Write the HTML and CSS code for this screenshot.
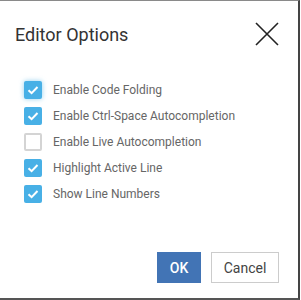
FILE: index.html
```html
<!DOCTYPE html>
<html lang="en">
<head>
    <meta charset="UTF-8">
    <title>Editor Options</title>
    <link rel="stylesheet" href="styles.css">
</head>
<body>
    <div class="dialog">
        <div class="dialog-header">
            <h1>Editor Options</h1>
            <button class="close-btn" aria-label="Close">
                <svg width="24" height="24" viewBox="0 0 24 24">
                    <path d="M1 1 L23 23 M23 1 L1 23" stroke="#222" stroke-width="1.6" fill="none"/>
                </svg>
            </button>
        </div>
        <div class="options">
            <label class="option">
                <span class="box checked focused"><svg width="18" height="18" viewBox="0 0 18 18"><path d="M4.5 9.2 L7.6 12.2 L13.5 6" stroke="#fff" stroke-width="2" fill="none"/></svg></span>
                Enable Code Folding
            </label>
            <label class="option">
                <span class="box checked"><svg width="18" height="18" viewBox="0 0 18 18"><path d="M4.5 9.2 L7.6 12.2 L13.5 6" stroke="#fff" stroke-width="2" fill="none"/></svg></span>
                Enable Ctrl-Space Autocompletion
            </label>
            <label class="option">
                <span class="box"></span>
                Enable Live Autocompletion
            </label>
            <label class="option">
                <span class="box checked"><svg width="18" height="18" viewBox="0 0 18 18"><path d="M4.5 9.2 L7.6 12.2 L13.5 6" stroke="#fff" stroke-width="2" fill="none"/></svg></span>
                Highlight Active Line
            </label>
            <label class="option">
                <span class="box checked"><svg width="18" height="18" viewBox="0 0 18 18"><path d="M4.5 9.2 L7.6 12.2 L13.5 6" stroke="#fff" stroke-width="2" fill="none"/></svg></span>
                Show Line Numbers
            </label>
        </div>
        <div class="dialog-footer">
            <button class="btn btn-primary">OK</button>
            <button class="btn btn-default">Cancel</button>
        </div>
    </div>
</body>
</html>
```

FILE: styles.css
```css
body {
    margin: 0;
    font-family: Roboto, "Liberation Sans", sans-serif;
    background-color: #fff;
}

.dialog {
    width: 300px;
    height: 300px;
    box-sizing: border-box;
    border-top: 1px solid #8a8a8a;
    border-right: 2px solid #444;
    border-bottom: 2px solid #555;
    background-color: #fff;
    display: flex;
    flex-direction: column;
}

.dialog-header {
    height: 66px;
    display: flex;
    align-items: center;
    justify-content: space-between;
    padding: 0 19px 0 15px;
}

.dialog-header h1 {
    margin: 0;
    font-size: 18px;
    font-weight: 400;
    color: #333;
}

.close-btn {
    background: none;
    border: none;
    padding: 0;
    width: 24px;
    height: 24px;
    cursor: pointer;
}

.close-btn svg {
    display: block;
}

.options {
    margin-top: 14px;
    padding-left: 24px;
    display: flex;
    flex-direction: column;
    gap: 8px;
}

.option {
    display: flex;
    align-items: center;
    gap: 11px;
    height: 18px;
    font-size: 12px;
    color: #666;
}

.box {
    width: 18px;
    height: 18px;
    box-sizing: border-box;
    border-radius: 2px;
    border: 2px solid #d4d4d4;
    background-color: #fff;
    flex-shrink: 0;
}

.box.checked {
    border: none;
    background-color: #48b0e6;
}

.box.focused {
    box-shadow: 0 0 5px rgba(72, 176, 230, 0.6);
}

.box svg {
    display: block;
}

.dialog-footer {
    margin-top: auto;
    display: flex;
    justify-content: flex-end;
    gap: 10px;
    padding: 0 19px 15px 0;
}

.btn {
    height: 31px;
    font-family: Roboto, "Liberation Sans", sans-serif;
    font-size: 14px;
    padding: 0;
    cursor: pointer;
}

.btn-primary {
    width: 44px;
    background-color: #4274b5;
    border: none;
    color: #fff;
    font-weight: 500;
}

.btn-default {
    width: 68px;
    background-color: #fff;
    border: 1px solid #ccc;
    color: #444;
}
```
